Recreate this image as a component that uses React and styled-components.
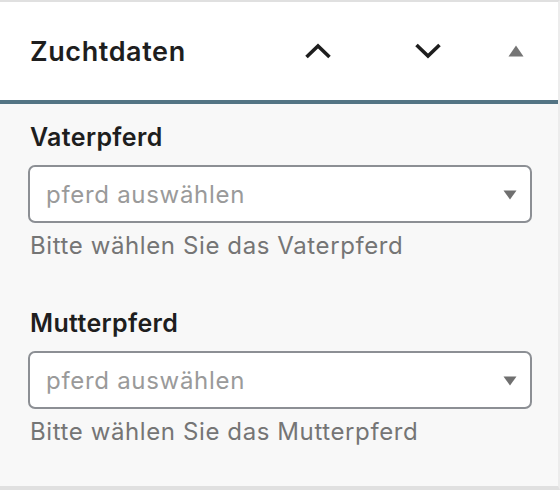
import styled, { createGlobalStyle } from "styled-components";

const GlobalStyle = createGlobalStyle`
  html, body {
    margin: 0;
    padding: 0;
    background: #f8f8f8;
  }
  body {
    font-family: Inter, "Noto Sans", "Liberation Sans", sans-serif;
    -webkit-font-smoothing: antialiased;
  }
`;

const fields = [
  { id: "vater", label: "Vaterpferd", help: "Bitte wählen Sie das Vaterpferd" },
  { id: "mutter", label: "Mutterpferd", help: "Bitte wählen Sie das Mutterpferd" },
];

const App = () => {
  return (
    <>
      <GlobalStyle />
      <Panel>
        <PanelHeader>
          <Title>Zuchtdaten</Title>
          <Actions>
            <IconButton aria-label="Nach oben verschieben">
              <svg width="28" height="18" viewBox="0 0 28 18">
                <path d="M2.5 15 L14 4 L25.5 15" fill="none" stroke="#1e1e1e" strokeWidth="3.6" />
              </svg>
            </IconButton>
            <IconButton $gap={62} aria-label="Nach unten verschieben">
              <svg width="28" height="18" viewBox="0 0 28 18">
                <path d="M2.5 3 L14 14 L25.5 3" fill="none" stroke="#1e1e1e" strokeWidth="3.6" />
              </svg>
            </IconButton>
            <IconButton $gap={40} aria-label="Bereich umschalten">
              <svg width="16" height="12" viewBox="0 0 16 12">
                <path d="M8 0.5 L15.5 11.5 L0.5 11.5 Z" fill="#757575" />
              </svg>
            </IconButton>
          </Actions>
        </PanelHeader>
        <PanelBody>
          {fields.map((f) => (
            <Field key={f.id}>
              <Label htmlFor={f.id}>{f.label}</Label>
              <SelectWrap>
                <Select id={f.id} defaultValue="">
                  <option value="" disabled>
                    pferd auswählen
                  </option>
                </Select>
                <Arrow width="14" height="10" viewBox="0 0 14 10">
                  <path d="M0.5 0.5 L13.5 0.5 L7 9.5 Z" fill="#6f6f6f" />
                </Arrow>
              </SelectWrap>
              <Help>{f.help}</Help>
            </Field>
          ))}
        </PanelBody>
      </Panel>
    </>
  );
};

export default App;

const Panel = styled.div`
  height: 490px;
  display: flex;
  flex-direction: column;
  border-top: 2px solid #e0e0e0;
  border-bottom: 4px solid #e0e0e0;
  border-right: 2px solid #ececec;
  box-sizing: border-box;
`;

const PanelHeader = styled.div`
  height: 102px;
  flex-shrink: 0;
  box-sizing: border-box;
  background: #fff;
  border-bottom: 4px solid #537484;
  display: flex;
  align-items: center;
  padding: 0 18px 0 30px;
`;

const Title = styled.h2`
  margin: 0;
  font-size: 27px;
  font-weight: 600;
  color: #1e1e1e;
  letter-spacing: 0.6px;
`;

const Actions = styled.div`
  margin-left: auto;
  display: flex;
  align-items: center;
`;

const IconButton = styled.button`
  all: unset;
  width: 48px;
  height: 48px;
  display: flex;
  align-items: center;
  justify-content: center;
  margin-left: ${(p) => (p.$gap ? `${p.$gap}px` : "0")};
  cursor: pointer;
`;

const PanelBody = styled.div`
  flex: 1;
  background: #f8f8f8;
  padding: 19px 28px 0 28px;
  display: flex;
  flex-direction: column;
  gap: 49px;
`;

const Field = styled.div`
  display: flex;
  flex-direction: column;
`;

const Label = styled.label`
  font-size: 25px;
  font-weight: 600;
  color: #1e1e1e;
  line-height: 28px;
  letter-spacing: 0.35px;
  margin-left: 2px;
  margin-bottom: 14px;
`;

const SelectWrap = styled.div`
  position: relative;
  width: 504px;
`;

const Select = styled.select`
  appearance: none;
  -webkit-appearance: none;
  width: 100%;
  height: 58px;
  box-sizing: border-box;
  border: 2px solid #8c8f94;
  border-radius: 7px;
  background: #fff;
  padding: 0 40px 0 16px;
  font-family: inherit;
  font-size: 24px;
  letter-spacing: 0.7px;
  color: #9a9a9a;
  outline: none;
`;

const Arrow = styled.svg`
  position: absolute;
  right: 15px;
  top: 25px;
  pointer-events: none;
`;

const Help = styled.p`
  margin: 9px 0 0 2px;
  font-size: 24px;
  line-height: 28px;
  letter-spacing: 0.6px;
  color: #757575;
`;
